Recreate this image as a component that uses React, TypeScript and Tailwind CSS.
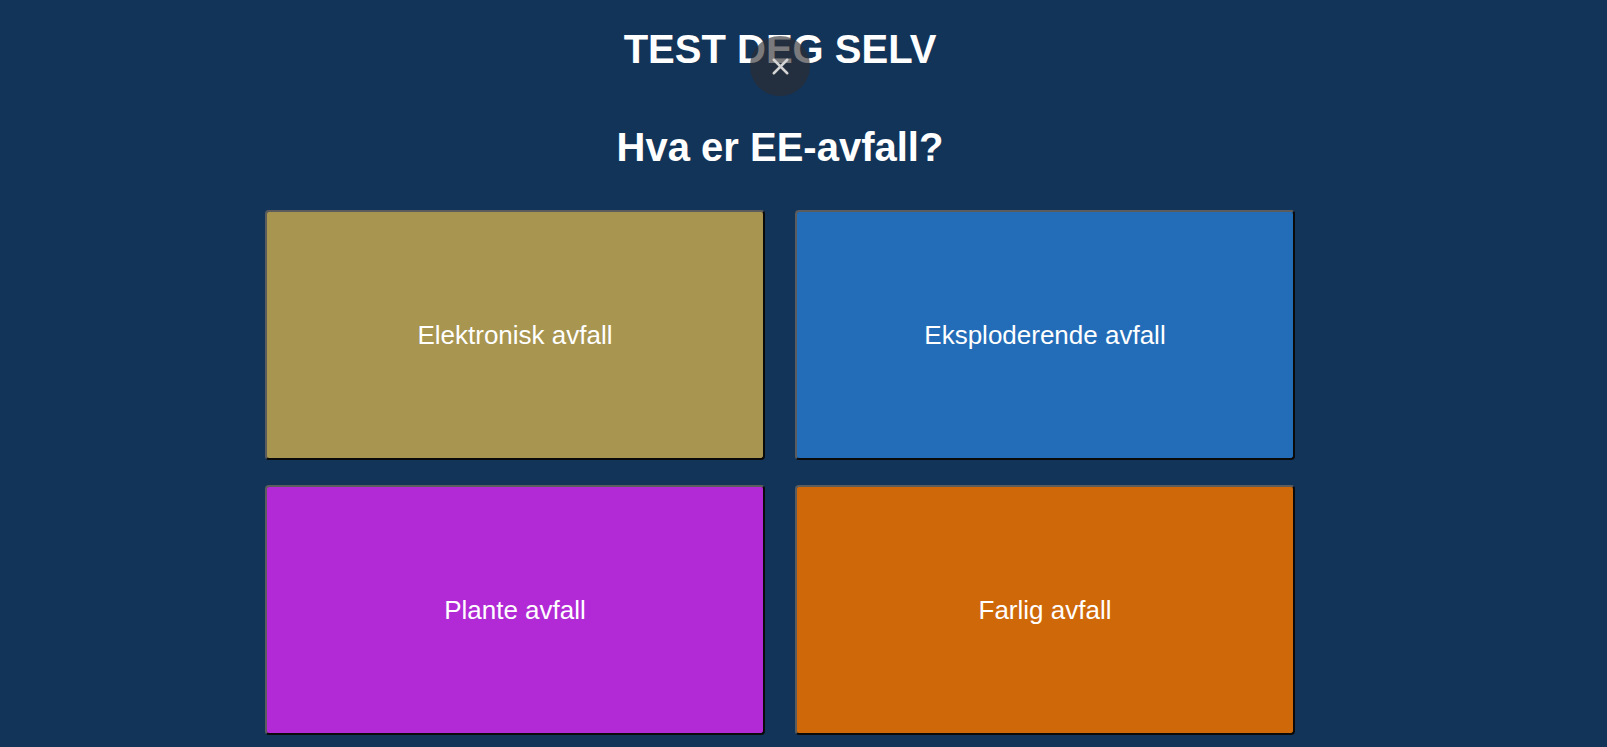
import { X } from 'lucide-react';

const ANSWERS = [
  { label: 'Elektronisk avfall', color: 'bg-[#a8954f]' },
  { label: 'Eksploderende avfall', color: 'bg-[#236db8]' },
  { label: 'Plante avfall', color: 'bg-[#b22ad5]' },
  { label: 'Farlig avfall', color: 'bg-[#cf6808]' },
];

export default function App() {
  return (
    <div className="min-h-screen w-full bg-[#133459] overflow-hidden font-['Liberation_Sans',Arial,sans-serif] text-white">
      <div className="relative w-[1560px] flex flex-col items-center pt-[26px]">
        <h1 className="text-[40px] leading-[46px] font-bold">TEST DEG SELV</h1>

        {/* close button sits over the title */}
        <button className="absolute left-[750px] top-[36px] w-[60px] h-[60px] rounded-full bg-[rgba(45,45,48,0.63)] flex items-center justify-center text-[#d4d4d4]">
          <X size={27} strokeWidth={2.2} />
        </button>

        <h2 className="mt-[52px] text-[40px] leading-[46px] font-bold">Hva er EE-avfall?</h2>

        <div className="mt-[40px] grid grid-cols-[500px_500px] gap-x-[30px] gap-y-[25px]">
          {ANSWERS.map((a) => (
            <button
              key={a.label}
              className={`${a.color} h-[250px] rounded-[4px] border-2 border-t-[#5c5c5c] border-l-[#5c5c5c] border-b-[#0a0a0a] border-r-[#0a0a0a] text-[26px] text-white flex items-center justify-center`}
            >
              {a.label}
            </button>
          ))}
        </div>
      </div>
    </div>
  );
}
